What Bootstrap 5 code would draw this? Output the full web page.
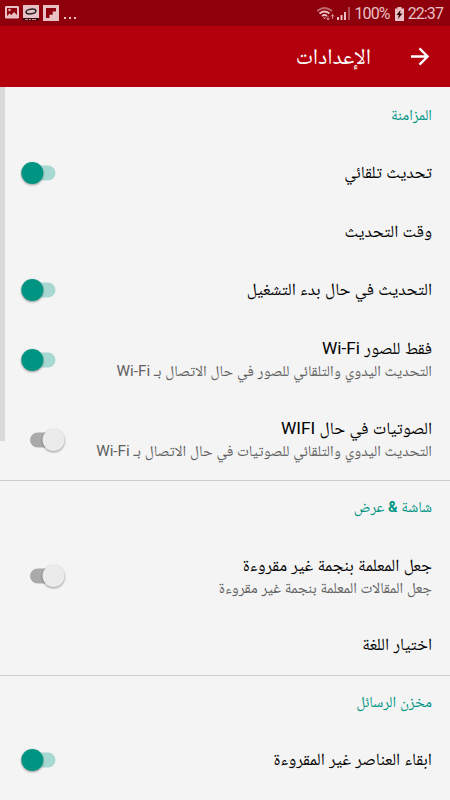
<!DOCTYPE html>
<html lang="ar" dir="rtl">
<head>
<meta charset="utf-8">
<meta name="viewport" content="width=device-width, initial-scale=1">
<title>الإعدادات</title>
<link href="https://cdn.jsdelivr.net/npm/bootstrap@5.3.0/dist/css/bootstrap.min.css" rel="stylesheet">
<style>
body{font-family:Roboto,"Noto Naskh Arabic","Noto Naskh Arabic UI",sans-serif;background:#f4f4f4;color:#000;width:450px;height:800px}
.status-bar{height:26px;background:#8e000b;color:#e8c0c5;font-size:16px;line-height:26px;padding:1px 6px 0 5px}
.status-clock{letter-spacing:-.9px}
.status-clock span{padding-right:1px}
.app-bar{height:61px;background:#b3000c;color:#fff;padding:0 21px 1px}
.app-title{font-size:22.2px;line-height:30px;font-weight:400;margin-inline-start:39px}
.scroll-thumb{left:0;top:87px;width:5px;height:354px;background:#d8d8d8}
.group-title{height:55.5px;color:#009483;font-size:15.2px;font-weight:400;padding:0 18px 1px;line-height:23px}
.group-first{height:57px}
.group-title b{font-weight:700;font-size:14.5px}
.setting{height:58.5px;padding:0 18px 0 20px}
.setting-tall{height:80px}
.setting-name{font-size:17.3px;line-height:23px}
.setting:not(.setting-tall) .setting-name{padding-bottom:1px}
.setting-note{font-size:15.25px;line-height:22px;color:#606060}
.settings-group + .settings-group{border-top:1px solid #cbcbcb}
.toggle{width:46px;height:28px;flex:none;display:block}
.knob{filter:drop-shadow(0 1px 1px rgba(0,0,0,.4))}
</style>
<script src="https://cdn.jsdelivr.net/npm/bootstrap@5.3.0/dist/js/bootstrap.bundle.min.js"></script>
</head>
<body class="overflow-hidden position-relative">
<div class="status-bar d-flex align-items-center justify-content-between" dir="ltr">
<div class="d-flex align-items-center">
<svg width="72" height="18" viewBox="0 0 72 18"><rect y="1" width="14" height="12.500" rx="1.200" fill="#e8c0c5"/><path d="M2 11V3h10v7L9 7l-2.500 3L4.500 8.500z" fill="#8e000b"/><circle cx="4.500" cy="5" r="1.200" fill="#e8c0c5"/><path d="M18 0h16v13H18z M38 0h16v16H38z" fill="#e8c0c5"/><path d="M18 13h16v2.500H18z" fill="#3a0b10"/><path d="M20 14.500h3m1 0h2m1 0h4" stroke="#e8c0c5" stroke-width=".8"/><ellipse cx="26" cy="6.500" rx="5" ry="2.300" transform="rotate(-7 26 7)" fill="none" stroke="#222" stroke-width="1.500"/><path d="M41 3h10v3.500h-3.300v3.200h-3.300V13H41z" fill="#8e000b"/><path d="M59 12h2v2h-2zm5 0h2v2h-2zm5 0h2v2h-2z" fill="#e8c0c5"/></svg>
</div>
<div class="status-clock d-flex align-items-center">
<svg class="me-1" width="34" height="18" viewBox="0 0 34 18"><g fill="none" stroke="#e8c0c5" stroke-width="1.700"><path d="M0 6q7.500-6 15 0" opacity=".55"/><path d="M2.500 8.500q5-4 10 0M5 11q2.500-2 5 0"/></g><path d="M6 12.500h3L7.500 14z" fill="#e8c0c5"/><path d="M11 11v4l-1.500-2m1.500 2 1.500-2M15.500 14V9.500L14 11.500m1.500-2 1.500 2" fill="none" stroke="#e8c0c5" opacity=".7"/><path d="M20 12h2v3h-2zm3.500-2h2v5h-2zm3.500-3h2v8h-2z" fill="#e8c0c5"/><path d="M31 2h2v13h-2z" fill="#e8c0c5" opacity=".4"/></svg>
<span class="lh-1">100%</span>
<svg class="mx-1" width="9" height="14" viewBox="0 0 9 14"><path d="M2.500 0h4v1.500H9V14H0V1.500h2.500z" fill="#e8c0c5"/><path d="M5.500 3 1.500 8h2.300L3 12l4.500-5.500H5z" fill="#300"/></svg>
<span class="lh-1">22:37</span></div>
</div>
<header class="app-bar d-flex align-items-center">
<svg width="19" height="19" viewBox="0 0 20 20" fill="none" stroke="#fff" stroke-width="2.400"><path d="M1 10h17M10 1.500l8.500 8.500-8.500 8.500"/></svg>
<h1 class="app-title mb-0">الإعدادات</h1>
</header>
<div class="scroll-thumb position-absolute"></div>
<svg class="d-none"><defs>
<g id="toggle-on"><rect x="10" y="6.500" width="25.500" height="15" rx="7.500" fill="#a8d8d2"/><circle class="knob" cx="12.300" cy="14" r="11" fill="#009483"/></g>
<g id="toggle-off"><rect x="10" y="6.500" width="27" height="15" rx="7.500" fill="#aaa"/><circle class="knob" cx="33.500" cy="14" r="11" fill="#ebebeb"/></g>
</defs></svg>
<main>
<section class="settings-group">
<h2 class="group-title group-first m-0 d-flex align-items-center">المزامنة</h2>
<div class="setting d-flex align-items-center justify-content-between"><div class="setting-name">تحديث تلقائي</div><svg class="toggle"><use href="#toggle-on"/></svg></div>
<div class="setting d-flex align-items-center"><div class="setting-name">وقت التحديث</div></div>
<div class="setting d-flex align-items-center justify-content-between"><div class="setting-name">التحديث في حال بدء التشغيل</div><svg class="toggle"><use href="#toggle-on"/></svg></div>
<div class="setting setting-tall d-flex align-items-center justify-content-between"><div><div class="setting-name">فقط للصور Wi-Fi</div><div class="setting-note">التحديث اليدوي والتلقائي للصور في حال الاتصال بـ Wi-Fi</div></div><svg class="toggle"><use href="#toggle-on"/></svg></div>
<div class="setting setting-tall d-flex align-items-center justify-content-between"><div><div class="setting-name">الصوتيات في حال WIFI</div><div class="setting-note">التحديث اليدوي والتلقائي للصوتيات في حال الاتصال بـ Wi-Fi</div></div><svg class="toggle"><use href="#toggle-off"/></svg></div>
</section>
<section class="settings-group">
<h2 class="group-title m-0 d-flex align-items-center"><span>شاشة <b>&amp;</b> عرض</span></h2>
<div class="setting setting-tall d-flex align-items-center justify-content-between"><div><div class="setting-name">جعل المعلمة بنجمة غير مقروءة</div><div class="setting-note">جعل المقالات المعلمة بنجمة غير مقروءة</div></div><svg class="toggle"><use href="#toggle-off"/></svg></div>
<div class="setting d-flex align-items-center"><div class="setting-name">اختيار اللغة</div></div>
</section>
<section class="settings-group">
<h2 class="group-title m-0 d-flex align-items-center">مخزن الرسائل</h2>
<div class="setting d-flex align-items-center justify-content-between"><div class="setting-name">ابقاء العناصر غير المقروءة</div><svg class="toggle"><use href="#toggle-on"/></svg></div>
</section>
</main>
</body>
</html>
